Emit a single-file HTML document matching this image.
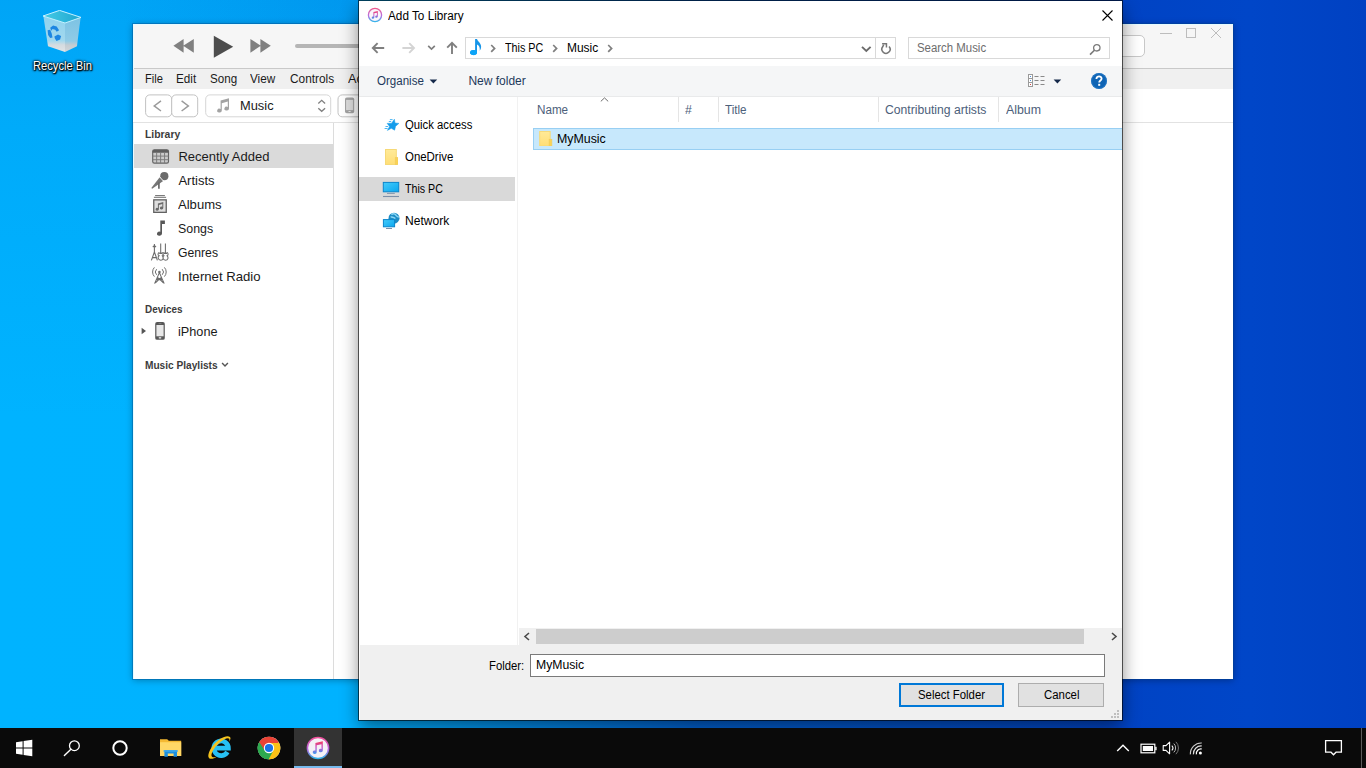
<!DOCTYPE html>
<html><head><meta charset="utf-8"><title>Add To Library</title>
<style>
html,body{margin:0;padding:0;}
body{width:1366px;height:768px;overflow:hidden;position:relative;font-family:"Liberation Sans",sans-serif;font-size:12px;background:#0078d7;}
div,svg,span{position:absolute;box-sizing:border-box;}
.t{white-space:nowrap;line-height:1;transform-origin:0 50%;}
#desk{left:0;top:0;width:1366px;height:728px;
 background:linear-gradient(90deg,#00b3ff 0px,#00b2ff 360px,#0060d0 700px,#0043c4 1122px,#0046c8 1250px,#0041c2 1366px);}
#deskv{left:0;top:0;width:360px;height:728px;background:linear-gradient(180deg,rgba(0,90,200,.16) 0px,rgba(0,90,200,.09) 130px,rgba(0,90,200,.0) 420px);}
#deskh{left:120px;top:0;width:240px;height:24px;background:linear-gradient(90deg,rgba(0,60,180,0),rgba(0,60,180,.12));}
#tb{left:0;top:728px;width:1366px;height:40px;background:#0a0a0a;}
</style></head><body>
<div id="desk"></div><div id="deskv"></div><div id="deskh"></div><svg style="left:40px;top:9.5px;" width="44" height="43" viewBox="0 0 44 43"><defs><linearGradient id="rbT" x1="0" y1="0" x2="1" y2="0"><stop offset="0" stop-color="#45cbe6"/><stop offset="1" stop-color="#1ea6d0"/></linearGradient><linearGradient id="rbL" x1="0" y1="0" x2="0" y2="1"><stop offset="0" stop-color="#8fd2ee"/><stop offset=".68" stop-color="#a2d8ee"/><stop offset=".8" stop-color="#d4dbe0"/><stop offset="1" stop-color="#e2e4e6"/></linearGradient><linearGradient id="rbR" x1="0" y1="0" x2="0" y2="1"><stop offset="0" stop-color="#7cc3e4"/><stop offset=".68" stop-color="#90cbe6"/><stop offset=".8" stop-color="#c4ccd2"/><stop offset="1" stop-color="#d2d6d9"/></linearGradient></defs><path d="M3.4 6.2 L25 12.8 L25 42 L8 36.2 Z" fill="url(#rbL)"/><path d="M25 12.8 L40.6 7.6 L37 36.2 L25 42 Z" fill="url(#rbR)"/><path d="M3 6 L19.6 0.4 L41 7.4 L25 13 Z" fill="url(#rbT)" stroke="#c4f1ff" stroke-width="1" stroke-linejoin="round"/><g fill="#1c86e2"><path d="M10.2 17.8 L13.1 15.5 L16.7 16.5 L19.1 20.2 L16.7 21.75 L15.2 19.7 L12.5 19.1 L11.25 20.7Z"/><path d="M7.6 20.2 L10.2 19.7 L11.8 23.8 L12.5 27.5 L10.2 28 L8.1 24.9Z"/><path d="M14.4 26.4 L18 24.4 L21.1 25.9 L20.1 29.6 L16.5 31.1 L14.9 28.5Z"/></g></svg><span class="t" style="left:33.00px;top:59.84px;font-size:12px;color:#fff;transform:scaleX(0.9312);text-shadow:0 1px 2px #000,0 0 3px #000,1px 1px 1px rgba(0,0,0,.9),0 0 2px #000;">Recycle Bin</span><div style="left:133px;top:24px;width:1100px;height:655px;background:#fff;box-shadow:0 0 0 1px rgba(0,70,140,.35),0 1px 7px rgba(0,0,0,.33);"></div><div style="left:133px;top:24px;width:1100px;height:45px;background:#f6f6f6;border-bottom:1px solid #c9c9c9;"></div><div style="left:133px;top:24px;width:1100px;height:1px;background:#e6fbff;"></div><div style="left:133px;top:24px;width:1px;height:655px;background:#e6fbff;"></div><div style="left:133px;top:69px;width:1100px;height:20px;background:#f0f0f0;"></div><div style="left:133px;top:89px;width:1100px;height:34px;background:#fff;border-bottom:1px solid #e2e2e2;"></div><div style="left:333px;top:123px;width:1px;height:556px;background:#dcdcdc;"></div><svg style="left:173px;top:38px;" width="22" height="16" viewBox="0 0 22 16"><path d="M0.4 7.8 L10.6 0.9 V14.7 Z M10.2 7.8 L20.8 0.9 V14.7 Z" fill="#808080"/></svg><svg style="left:213px;top:35px;" width="21" height="24" viewBox="0 0 21 24"><path d="M0.8 0.8 L20.2 11.8 L0.8 22.8 Z" fill="#4d4d4d"/></svg><svg style="left:250px;top:38px;" width="22" height="16" viewBox="0 0 22 16"><path d="M0.4 0.9 L10.8 7.8 L0.4 14.7 Z M10.4 0.9 L20.8 7.8 L10.4 14.7 Z" fill="#808080"/></svg><div style="left:295px;top:44px;width:80px;height:4px;background:#b5b5b5;border-radius:2px;"></div><div style="left:1160px;top:33px;width:12px;height:1px;background:#bdbdbd;"></div><div style="left:1186px;top:28px;width:10px;height:10px;border:1px solid #bdbdbd;"></div><svg style="left:1210px;top:27px;" width="12" height="12" viewBox="0 0 12 12"><path d="M1 1 L11 11 M11 1 L1 11" stroke="#bdbdbd" stroke-width="1" fill="none"/></svg><div style="left:1060px;top:35px;width:85px;height:22px;background:#fff;border:1px solid #c8c8c8;border-radius:5px;"></div><span class="t" style="left:145.00px;top:72.84px;font-size:12px;color:#1a1a1a;transform:scaleX(0.9309);">File</span><span class="t" style="left:175.80px;top:72.84px;font-size:12px;color:#1a1a1a;transform:scaleX(0.9769);">Edit</span><span class="t" style="left:209.50px;top:72.84px;font-size:12px;color:#1a1a1a;transform:scaleX(0.9670);">Song</span><span class="t" style="left:250.40px;top:72.84px;font-size:12px;color:#1a1a1a;transform:scaleX(0.9770);">View</span><span class="t" style="left:289.50px;top:72.84px;font-size:12px;color:#1a1a1a;transform:scaleX(0.9869);">Controls</span><span class="t" style="left:347.50px;top:72.84px;font-size:12px;color:#1a1a1a;transform:scaleX(1.0609);">Account</span><svg style="left:140px;top:90px;" width="220" height="32" viewBox="0 0 220 32"><rect x="5.6" y="4.9" width="26.1" height="21.9" rx="4.2" fill="#fff" stroke="#c2c2c2" stroke-width="1"/><rect x="31.7" y="4.9" width="26" height="21.9" rx="4.2" fill="#fff" stroke="#c2c2c2" stroke-width="1"/><rect x="65.7" y="4.9" width="125" height="21.9" rx="4.2" fill="#fff" stroke="#d6d6d6" stroke-width="1"/><rect x="198" y="4.9" width="40" height="21.9" rx="4.2" fill="#fff" stroke="#c2c2c2" stroke-width="1"/><path d="M21 10.8 L14.2 15.9 L21 21" stroke="#9a9a9a" stroke-width="1.45" fill="none"/><path d="M41.6 10.8 L48.4 15.9 L41.6 21" stroke="#9a9a9a" stroke-width="1.45" fill="none"/><path d="M178.3 13.4 L181.7 10.3 L185.1 13.4 M178.3 18.2 L181.7 21.3 L185.1 18.2" stroke="#808080" stroke-width="1.35" fill="none"/><rect x="205" y="7.4" width="9.2" height="15.8" rx="1.8" fill="#a4a4a4"/><rect x="206.1" y="9.9" width="7" height="10.2" fill="#dedede"/><rect x="208.5" y="21" width="2.2" height="1.1" rx=".3" fill="#e8e8e8"/></svg><svg style="left:216px;top:97px;" width="15" height="17" viewBox="0 0 15 17"><path d="M4.6 3.4 L13 1.2 V11.6 a2.3 1.9 0 1 1 -1.2 -1.7 V4.6 L5.8 6.2 V13.6 a2.3 1.9 0 1 1 -1.2 -1.7 Z" fill="#a3a3a3"/></svg><span class="t" style="left:240.40px;top:98.83px;font-size:13.2px;color:#1a1a1a;transform:scaleX(0.9749);">Music</span><span class="t" style="left:145.00px;top:128.89px;font-size:11px;color:#3c3c3c;font-weight:700;transform:scaleX(0.9439);">Library</span><div style="left:134px;top:144px;width:199px;height:24px;background:#dadada;"></div><span class="t" style="left:178.40px;top:149.80px;font-size:13px;color:#1a1a1a;">Recently Added</span><span class="t" style="left:178.40px;top:173.70px;font-size:13px;color:#1a1a1a;">Artists</span><span class="t" style="left:178.40px;top:197.50px;font-size:13px;color:#1a1a1a;transform:scaleX(1.0057);">Albums</span><span class="t" style="left:178.40px;top:221.50px;font-size:13px;color:#1a1a1a;transform:scaleX(0.9522);">Songs</span><span class="t" style="left:178.40px;top:245.70px;font-size:13px;color:#1a1a1a;transform:scaleX(0.9382);">Genres</span><span class="t" style="left:178.40px;top:269.80px;font-size:13px;color:#1a1a1a;transform:scaleX(1.0114);">Internet Radio</span><svg style="left:151px;top:148px;" width="19" height="17" viewBox="0 0 19 17"><rect x="1.7" y="1.7" width="15.8" height="13.4" rx="1.6" fill="#cbcbcb" stroke="#646464" stroke-width="1.15"/><path d="M1.7 3.2 a1.5 1.5 0 0 1 1.5 -1.5 h12.8 a1.5 1.5 0 0 1 1.5 1.5 v1.5 h-15.8z" fill="#5e5e5e"/><path d="M1.7 8.1 H17.5 M1.7 11.7 H17.5 M5.65 4.6 V15.1 M9.6 4.6 V15.1 M13.55 4.6 V15.1" stroke="#7a7a7a" stroke-width=".95"/></svg><svg style="left:151px;top:171px;" width="19" height="19" viewBox="0 0 19 19"><circle cx="13.3" cy="5.2" r="4.1" fill="#6b6b6b"/><path d="M8.7 6.3 L12.2 9.9 L1.2 17.7 L.3 17 Z" fill="#767676"/><path d="M8.4 5.5 L12.6 10.2" stroke="#fff" stroke-width=".85"/><path d="M7.9 11.2 V17.7" stroke="#6b6b6b" stroke-width="1.7"/></svg><svg style="left:152px;top:195px;" width="17" height="19" viewBox="0 0 17 19"><path d="M3.1 .6 H12.9 M1.9 2.3 H14.1" stroke="#6e6e6e" stroke-width="1"/><rect x="1.75" y="4.85" width="12.5" height="12.5" fill="#dedede" stroke="#626262" stroke-width="1.3"/><path d="M5.9 8.5 L11.3 7.1 V13.1 a1.7 1.4 0 1 1 -1 -1.3 V9 L6.9 9.9 V14.3 a1.7 1.4 0 1 1 -1 -1.3 Z" fill="#6a6a6a"/></svg><svg style="left:155px;top:219px;" width="12" height="19" viewBox="0 0 12 19"><path d="M5.3 1.5 H9.9 V5 H7 V14.6 a2.5 2.05 0 1 1 -1.7 -1.9 Z" fill="#585858"/></svg><svg style="left:150px;top:243px;" width="20" height="19" viewBox="0 0 20 19"><path d="M4.4 1 V9 M2.8 4.2 L4.4 2.4 L6 4.2 M1.4 17.4 L4.4 9 L7.4 17.4 M2.4 14.6 H6.4" stroke="#6c6c6c" stroke-width="1.1" fill="none"/><path d="M10.7 .4 V10.4 M15.4 .4 V10.4 M9.1 9.4 c-1.5 1.1 -1.3 2.8 0 3.4 c-1.7 1.2 -1.1 4.4 1.6 4.4 c2.6 0 3.2 -3 1.6 -4.4 c1.2 -.8 1.4 -2.4 0 -3.4 M13.9 9.4 c-1.5 1.1 -1.3 2.8 0 3.4 c-1.7 1.2 -1.1 4.4 1.6 4.4 c2.6 0 3.2 -3 1.6 -4.4 c1.2 -.8 1.4 -2.4 0 -3.4" stroke="#6c6c6c" stroke-width="1.05" fill="none"/><path d="M9.2 10.2 h3.2 M14 10.2 h3.2" stroke="#6c6c6c" stroke-width="1.4"/></svg><svg style="left:150px;top:267px;" width="19" height="19" viewBox="0 0 19 19"><path d="M9.4 5.6 L4.6 16.6 M9.4 5.6 L14.2 16.6 M6.4 12.6 L12.4 12.6 M7.4 10.2 L13.4 15.8 M11.4 10.2 L5.4 15.8" stroke="#6c6c6c" stroke-width="1.1" fill="none"/><circle cx="9.4" cy="5" r="1.3" fill="#6c6c6c"/><path d="M6.6 2.2 a4 4 0 0 0 0 5.6 M12.2 2.2 a4 4 0 0 1 0 5.6 M4.4 .4 a6.8 6.8 0 0 0 0 9.2 M14.4 .4 a6.8 6.8 0 0 1 0 9.2" stroke="#6c6c6c" stroke-width="1" fill="none"/></svg><span class="t" style="left:145.00px;top:303.99px;font-size:11px;color:#3c3c3c;font-weight:700;transform:scaleX(0.8993);">Devices</span><svg style="left:141px;top:327px;" width="6" height="8" viewBox="0 0 6 8"><path d="M.6 .8 L5 4 L.6 7.2Z" fill="#555"/></svg><svg style="left:154px;top:321px;" width="12" height="20" viewBox="0 0 12 20"><rect x="1.2" y="1.1" width="9.6" height="17.7" rx="1.9" fill="#575757"/><rect x="2.4" y="4" width="7.2" height="11.3" fill="#e8e8e8"/><rect x="4.7" y="16.2" width="2.6" height="1.3" rx=".4" fill="#f4f4f4"/><rect x="4.6" y="2.2" width="2.8" height=".7" fill="#8a8a8a"/></svg><span class="t" style="left:178.40px;top:324.80px;font-size:13px;color:#1a1a1a;transform:scaleX(0.9757);">iPhone</span><span class="t" style="left:145.00px;top:359.59px;font-size:11px;color:#3c3c3c;font-weight:700;transform:scaleX(0.9205);">Music Playlists</span><svg style="left:221px;top:361px;" width="8" height="7" viewBox="0 0 8 7"><path d="M1.1 1.9 L4 4.9 L6.9 1.9" stroke="#555" stroke-width="1.4" fill="none"/></svg><div style="left:359px;top:1px;width:763px;height:719px;background:#fff;box-shadow:0 0 0 1px rgba(0,0,0,.62),0 7px 17px rgba(0,0,0,.46);"></div><svg style="left:367px;top:7px;" width="16" height="16" viewBox="0 0 16 16"><defs><linearGradient id="dr" x1="0" y1="0" x2="0" y2="1"><stop offset="0" stop-color="#ee5a8e"/><stop offset=".55" stop-color="#b86ddf"/><stop offset="1" stop-color="#36b4ea"/></linearGradient><linearGradient id="dn" x1="0" y1="0" x2="0" y2="1"><stop offset="0" stop-color="#f2416a"/><stop offset=".5" stop-color="#c552c6"/><stop offset="1" stop-color="#3d97ee"/></linearGradient></defs><circle cx="8" cy="8" r="6.6" fill="#faf6fb" stroke="url(#dr)" stroke-width="1.3"/><path d="M6.4 4.9 L10.8 3.9 V9.6 a1.3 1.1 0 1 1 -.9 -1 V5.7 L7.3 6.3 V10.6 a1.3 1.1 0 1 1 -.9 -1 Z" fill="url(#dn)"/></svg><span class="t" style="left:388.20px;top:9.84px;font-size:12px;color:#000;transform:scaleX(0.9798);">Add To Library</span><svg style="left:1101px;top:9px;" width="13" height="13" viewBox="0 0 13 13"><path d="M1.5 1.5 L11.5 11.5 M11.5 1.5 L1.5 11.5" stroke="#000" stroke-width="1.1" fill="none"/></svg><svg style="left:371px;top:41px;" width="15" height="14" viewBox="0 0 15 14"><path d="M13.2 7 H2.4 M6.6 2.2 L1.8 7 L6.6 11.8" stroke="#7f7f7f" stroke-width="1.9" fill="none"/></svg><svg style="left:401px;top:41px;" width="15" height="14" viewBox="0 0 15 14"><path d="M1.4 7 H12.4 M8.2 2.2 L13 7 L8.2 11.8" stroke="#d4d4d4" stroke-width="1.9" fill="none"/></svg><svg style="left:427px;top:44px;" width="9" height="7" viewBox="0 0 9 7"><path d="M1.2 1.8 L4.5 5 L7.8 1.8" stroke="#7f7f7f" stroke-width="1.7" fill="none"/></svg><svg style="left:445px;top:41px;" width="14" height="14" viewBox="0 0 14 14"><path d="M7 12.9 V2.4 M2.2 6.6 L7 1.8 L11.8 6.6" stroke="#7f7f7f" stroke-width="1.9" fill="none"/></svg><div style="left:465px;top:37px;width:431px;height:22px;background:#fff;border:1px solid #d9d9d9;"></div><div style="left:875px;top:38px;width:1px;height:20px;background:#d9d9d9;"></div><svg style="left:469px;top:38px;" width="13" height="18" viewBox="0 0 13 18"><path d="M6.1 1.1 H8 C8.6 3.6 12.4 5.2 12.1 9 C12 10.6 11.4 12 10.6 12.8 C11.2 10 10.4 7.4 8 6.4 V14.5 A3.5 2.5 0 1 1 6.1 12.4 Z" fill="#1795e8"/><ellipse cx="4.6" cy="14.5" rx="3.4" ry="2.4" fill="#0ca5f8"/></svg><svg style="left:490px;top:44px;" width="6" height="9" viewBox="0 0 6 9"><path d="M1.2 1 L4.6 4.4 L1.2 7.8" stroke="#7f7f7f" stroke-width="1.7" fill="none"/></svg><svg style="left:552px;top:44px;" width="6" height="9" viewBox="0 0 6 9"><path d="M1.2 1 L4.6 4.4 L1.2 7.8" stroke="#7f7f7f" stroke-width="1.7" fill="none"/></svg><svg style="left:607px;top:44px;" width="6" height="9" viewBox="0 0 6 9"><path d="M1.2 1 L4.6 4.4 L1.2 7.8" stroke="#7f7f7f" stroke-width="1.7" fill="none"/></svg><span class="t" style="left:505.00px;top:41.84px;font-size:12px;color:#000;transform:scaleX(0.8952);">This PC</span><span class="t" style="left:567.00px;top:41.84px;font-size:12px;color:#000;transform:scaleX(0.9957);">Music</span><svg style="left:861px;top:45px;" width="11" height="8" viewBox="0 0 11 8"><path d="M1 1.9 L5.3 6 L9.6 1.9" stroke="#6b6b6b" stroke-width="1.9" fill="none"/></svg><svg style="left:880px;top:42px;" width="12" height="13" viewBox="0 0 12 13"><path d="M9.05 4.46 A4.1 4.1 0 1 1 2.7 4.75 L3.7 2.7" stroke="#777" stroke-width="1.55" fill="none"/><path d="M2.1 1.75 H6.45 V5.6" stroke="#777" stroke-width="1.5" fill="none"/></svg><div style="left:908px;top:37px;width:202px;height:22px;background:#fff;border:1px solid #d9d9d9;"></div><span class="t" style="left:917.40px;top:41.84px;font-size:12px;color:#6d6d6d;transform:scaleX(0.9506);">Search Music</span><svg style="left:1089px;top:43px;" width="13" height="13" viewBox="0 0 13 13"><circle cx="7.8" cy="4.8" r="3.2" stroke="#7a7a7a" stroke-width="1.3" fill="none"/><path d="M5.4 7.2 L1 11.6" stroke="#7a7a7a" stroke-width="1.6"/></svg><div style="left:359px;top:66px;width:763px;height:31px;background:#f5f6f7;border-bottom:1px solid #e9eaeb;"></div><span class="t" style="left:377.30px;top:74.84px;font-size:12px;color:#1e395b;transform:scaleX(0.9632);">Organise</span><svg style="left:429px;top:79px;" width="9" height="5" viewBox="0 0 9 5"><path d="M.6 .4 H8.2 L4.4 4.4Z" fill="#15294a"/></svg><span class="t" style="left:468.40px;top:74.84px;font-size:12px;color:#1e395b;">New folder</span><svg style="left:1027.5px;top:74px;" width="18" height="13" viewBox="0 0 18 13"><rect x=".5" y=".5" width="4" height="12" fill="#fff" stroke="#9a9a9a" stroke-width="1"/><path d="M.5 4.5 H4.5 M.5 8.5 H4.5" stroke="#9a9a9a"/><rect x="2" y="2" width="1" height="1" fill="#4a90d9"/><rect x="2" y="6" width="1" height="1" fill="#4a90d9"/><rect x="2" y="10" width="1" height="1" fill="#d64545"/><path d="M6.5 2.5 H10.5 M12.5 2.5 H16.5 M6.5 6.5 H10.5 M12.5 6.5 H16.5 M6.5 10.5 H10.5 M12.5 10.5 H16.5" stroke="#8a8a8a" stroke-width="1"/></svg><svg style="left:1053px;top:79px;" width="9" height="5" viewBox="0 0 9 5"><path d="M.6 .4 H8.2 L4.4 4.4Z" fill="#15294a"/></svg><svg style="left:1090px;top:72px;" width="18" height="18" viewBox="0 0 18 18"><circle cx="9" cy="9" r="8" fill="#0f64b4"/><circle cx="9" cy="9" r="7.4" fill="none" stroke="#2a7fd0" stroke-width=".6"/><path d="M6.4 7 C6.4 3.4 11.8 3.6 11.6 6.8 C11.5 8.6 9.2 8.6 9.2 10.6" stroke="#fff" stroke-width="1.8" fill="none"/><rect x="8.2" y="11.8" width="2" height="2" fill="#fff"/></svg><div style="left:517px;top:97px;width:1px;height:548px;background:#f1f1f1;"></div><div style="left:359px;top:177px;width:156px;height:24px;background:#d9d9d9;"></div><svg style="left:384px;top:118px;" width="16" height="14" viewBox="0 0 16 14"><path d="M10.4 1.2 L11 5 L14.9 5.4 L11.6 8.3 L10.6 12.2 L7.3 10.3 L3.4 12.4 L5.6 8.4 L3.1 5.4 L7.6 5.2 Z" fill="#149ceb" stroke="#149ceb" stroke-width=".5" stroke-linejoin="round"/><path d="M5.9 1.6 H8.6 M4.8 3.5 H7.2 M1.5 8.5 H4.2 M.6 10.5 H3.6" stroke="#3aaef0" stroke-width=".9"/></svg><svg style="left:384.5px;top:149px;" width="13.5" height="16" viewBox="0 0 13.5 16"><defs><linearGradient id="fg" x1="0" y1="0" x2="0" y2="1"><stop offset="0" stop-color="#ffea98"/><stop offset="1" stop-color="#ffde76"/></linearGradient></defs><rect x=".5" y=".5" width="10.8" height="15" fill="url(#fg)" stroke="#f6d977" stroke-width="1"/><rect x="10.3" y="8.6" width="2.7" height="6.9" fill="#fad355" stroke="#f3cd5c" stroke-width=".8"/></svg><svg style="left:382px;top:181px;" width="18" height="17" viewBox="0 0 18 17"><defs><linearGradient id="pc" x1="0" y1="0" x2="1" y2="1"><stop offset="0" stop-color="#45ccfb"/><stop offset="1" stop-color="#0aa6ee"/></linearGradient></defs><rect x="1.3" y="1.4" width="15.4" height="9.4" fill="url(#pc)" stroke="#0b86cc" stroke-width="1"/><path d="M5 12.4 H12.8" stroke="#8496ad" stroke-width="1"/><path d="M1 15.5 H17" stroke="#7d90a9" stroke-width="1.1"/></svg><svg style="left:382px;top:212px;" width="18" height="18" viewBox="0 0 18 18"><circle cx="12" cy="6.2" r="5.5" fill="#1d8cc4"/><path d="M9.4 2.6 c1.4 -1.2 3.4 -1.2 4.4 .4 c.8 1.4 2.4 1.6 3 2.4 M8.6 5 c2.2 -.6 3.2 1 4.8 1.4" stroke="#8ad6f5" stroke-width="1.5" fill="none"/><rect x="1.4" y="7.6" width="11.2" height="7.2" fill="url(#pc)" stroke="#0b86cc" stroke-width="1"/><path d="M4 16.5 H10" stroke="#7d90a9" stroke-width="1"/></svg><span class="t" style="left:404.70px;top:118.84px;font-size:12px;color:#000;transform:scaleX(0.9432);">Quick access</span><span class="t" style="left:404.70px;top:150.84px;font-size:12px;color:#000;transform:scaleX(0.9530);">OneDrive</span><span class="t" style="left:404.70px;top:182.84px;font-size:12px;color:#000;transform:scaleX(0.8881);">This PC</span><span class="t" style="left:404.70px;top:214.84px;font-size:12px;color:#000;transform:scaleX(1.0043);">Network</span><div style="left:678px;top:97px;width:1px;height:25px;background:#e5e5e5;"></div><div style="left:718px;top:97px;width:1px;height:25px;background:#e5e5e5;"></div><div style="left:878px;top:97px;width:1px;height:25px;background:#e5e5e5;"></div><div style="left:998px;top:97px;width:1px;height:25px;background:#e5e5e5;"></div><svg style="left:600px;top:97px;" width="9" height="5" viewBox="0 0 9 5"><path d="M.8 4.4 L4.5 .9 L8.2 4.4" stroke="#6d6d6d" stroke-width="1" fill="none"/></svg><span class="t" style="left:536.70px;top:103.84px;font-size:12px;color:#4c607a;transform:scaleX(0.9716);">Name</span><span class="t" style="left:685.20px;top:103.84px;font-size:12px;color:#4c607a;transform:scaleX(1.0189);">#</span><span class="t" style="left:725.40px;top:103.84px;font-size:12px;color:#4c607a;transform:scaleX(0.9719);">Title</span><span class="t" style="left:885.40px;top:103.84px;font-size:12px;color:#4c607a;transform:scaleX(1.0136);">Contributing artists</span><span class="t" style="left:1005.60px;top:103.84px;font-size:12px;color:#4c607a;transform:scaleX(1.0290);">Album</span><div style="left:533px;top:128px;width:589px;height:22px;background:#c7e8fc;border:1px solid #98cff3;border-right:none;"></div><svg style="left:539px;top:130.5px;" width="13.5" height="15.5" viewBox="0 0 13.5 16"><defs><linearGradient id="fg" x1="0" y1="0" x2="0" y2="1"><stop offset="0" stop-color="#ffea98"/><stop offset="1" stop-color="#ffde76"/></linearGradient></defs><rect x=".5" y=".5" width="10.8" height="15" fill="url(#fg)" stroke="#f6d977" stroke-width="1"/><rect x="10.3" y="8.6" width="2.7" height="6.9" fill="#fad355" stroke="#f3cd5c" stroke-width=".8"/></svg><span class="t" style="left:557.20px;top:132.64px;font-size:12px;color:#000;transform:scaleX(1.0310);">MyMusic</span><div style="left:519px;top:628px;width:603px;height:17px;background:#f0f0f0;"></div><div style="left:536px;top:629px;width:548px;height:15px;background:#cdcdcd;"></div><svg style="left:523px;top:632px;" width="8" height="9" viewBox="0 0 8 9"><path d="M6 1 L2 4.5 L6 8" stroke="#4a4a4a" stroke-width="1.6" fill="none"/></svg><svg style="left:1110px;top:632px;" width="8" height="9" viewBox="0 0 8 9"><path d="M2 1 L6 4.5 L2 8" stroke="#4a4a4a" stroke-width="1.6" fill="none"/></svg><div style="left:360px;top:645px;width:762px;height:75px;background:#f0f0f0;"></div><span class="t" style="left:489.30px;top:660.14px;font-size:12px;color:#000;transform:scaleX(0.9425);">Folder:</span><div style="left:530px;top:654px;width:575px;height:23px;background:#fff;border:1px solid #7a7a7a;"></div><span class="t" style="left:536.30px;top:658.84px;font-size:12px;color:#000;transform:scaleX(1.0183);">MyMusic</span><div style="left:899px;top:683px;width:105px;height:24px;background:#e1e1e1;border:2px solid #0078d7;"></div><span class="t" style="left:918.30px;top:689.14px;font-size:12px;color:#000;transform:scaleX(0.9477);">Select Folder</span><div style="left:1018px;top:683px;width:86px;height:24px;background:#e1e1e1;border:1px solid #adadad;"></div><span class="t" style="left:1043.50px;top:689.14px;font-size:12px;color:#000;transform:scaleX(0.9504);">Cancel</span><svg style="left:1111px;top:710px;" width="8" height="8" viewBox="0 0 8 8"><rect x="6" y="0" width="2" height="2" fill="#bfbfbf"/><rect x="3" y="3" width="2" height="2" fill="#bfbfbf"/><rect x="6" y="3" width="2" height="2" fill="#bfbfbf"/><rect x="0" y="6" width="2" height="2" fill="#bfbfbf"/><rect x="3" y="6" width="2" height="2" fill="#bfbfbf"/><rect x="6" y="6" width="2" height="2" fill="#bfbfbf"/></svg><div id="tb"></div><svg style="left:15px;top:739px;" width="18" height="18" viewBox="0 0 18 18"><path fill="#fff" d="M1 3.2 L7.6 2.2 V8.5 H1 Z M8.6 2.05 L17.3 0.8 V8.5 H8.6 Z M1 9.5 H7.6 V15.8 L1 14.8 Z M8.6 9.5 H17.3 V17.2 L8.6 15.95 Z"/></svg><svg style="left:62px;top:738px;" width="20" height="20" viewBox="0 0 20 20"><circle cx="12.4" cy="7.7" r="4.9" fill="none" stroke="#fff" stroke-width="1.3"/><path d="M8.9 11.2 L2.4 17.6" stroke="#fff" stroke-width="1.4" stroke-linecap="round"/></svg><svg style="left:110px;top:738px;" width="20" height="20" viewBox="0 0 20 20"><circle cx="10" cy="10" r="6.7" fill="none" stroke="#fff" stroke-width="2"/></svg><svg style="left:159px;top:737px;" width="24" height="22" viewBox="0 0 24 22"><path d="M1 2.2 h7.2 l1.6 1.6 h12.4 v15.2 h-21.2z" fill="#f5b932"/><path d="M1 5.2 h21.2 v13.8 h-21.2z" fill="#ffd766"/><path d="M5.4 19.8 v-6.6 h12.6 v6.6 h-3.4 v-3.4 h-5.8 v3.4z" fill="#1c8fdf"/><path d="M4.6 13.2 h14.2 v1.6 h-14.2z" fill="#3aa7ee"/></svg><svg style="left:207px;top:734px;" width="26" height="26" viewBox="0 0 26 26"><path d="M20.4 18 A7.3 7.3 0 1 1 21.4 14.2 H8.4" stroke="#27c1f4" stroke-width="4.7" fill="none"/><path d="M23 3 c-3 -2.6 -11.4 1.2 -17 8.6 c-4.6 6 -5.8 11.4 -3.6 12.8 c1.8 1.1 5 .1 7.2 -1.7 c-2.6 1.1 -4.6 .7 -5 -.7 c-.8 -2.6 2.4 -8.4 7 -12.6 c4.4 -4 9.6 -6.2 10.6 -4.6 c.4 .6 .2 1.8 -.3 2.9 c1.6 -1.9 2.1 -3.7 1.1 -4.7z" fill="#f5c31d"/></svg><svg style="left:257px;top:736px;" width="24" height="24" viewBox="0 0 24 24"><circle cx="12" cy="12" r="11.3" fill="#fff"/><path d="M12 12 L2.2 6.35 A11.3 11.3 0 0 1 21.8 6.35 Z" fill="#ea4335"/><path d="M12 12 L21.8 6.35 A11.3 11.3 0 0 1 12 23.3 Z" fill="#fbc116"/><path d="M12 12 L12 23.3 A11.3 11.3 0 0 1 2.2 6.35 Z" fill="#2da94f"/><path d="M12 6.9 H21.5 A11.3 11.3 0 0 0 2.2 6.35 L7.6 14.5 Z" fill="#ea4335"/><path d="M16.4 14.55 L11.7 23.3 A11.3 11.3 0 0 0 21.5 6.9 H12 Z" fill="#fbc116"/><path d="M7.6 14.55 L2.2 6.35 A11.3 11.3 0 0 0 11.7 23.3 L16.4 14.55 Z" fill="#2da94f"/><circle cx="12" cy="12" r="5.2" fill="#fff"/><circle cx="12" cy="12" r="4.1" fill="#1a73e8"/></svg><div style="left:294px;top:728px;width:48px;height:40px;background:#333;"></div><div style="left:294px;top:766px;width:48px;height:2px;background:#76b9ed;"></div><svg style="left:306px;top:736px;" width="24" height="24" viewBox="0 0 24 24"><defs><linearGradient id="itr" x1="0" y1="0" x2="0" y2="1"><stop offset="0" stop-color="#f0529a"/><stop offset=".55" stop-color="#b765e0"/><stop offset="1" stop-color="#2fb5ec"/></linearGradient><linearGradient id="itn" x1="0" y1="0" x2="0" y2="1"><stop offset="0" stop-color="#f43e5c"/><stop offset=".5" stop-color="#c44fc9"/><stop offset="1" stop-color="#3a9cf0"/></linearGradient></defs><circle cx="12" cy="12" r="10.6" fill="#f4f1f6" stroke="url(#itr)" stroke-width="1.5"/><path d="M9.4 6.9 L16.8 5.2 V14.6 a2 1.7 0 1 1 -1.3 -1.6 V8.2 L10.7 9.3 V16.2 a2 1.7 0 1 1 -1.3 -1.6 Z" fill="url(#itn)"/></svg><svg style="left:1116px;top:743px;" width="14" height="10" viewBox="0 0 14 10"><path d="M1.2 8 L7 2.2 L12.8 8" stroke="#fff" fill="none" stroke-width="1.4"/></svg><svg style="left:1139.5px;top:743px;" width="18" height="12" viewBox="0 0 18 12"><rect x="1" y="1.2" width="13.8" height="8.6" stroke="#fff" fill="none" stroke-width="1.2"/><rect x="2.8" y="3" width="10.2" height="5" fill="#fff"/><rect x="15.2" y="3.8" width="1.4" height="3.4" fill="#fff"/></svg><svg style="left:1162px;top:740px;" width="20" height="16" viewBox="0 0 20 16"><path d="M1.2 5.6 h2.8 l3.6 -3.4 v11.6 l-3.6 -3.4 h-2.8z" stroke="#fff" fill="none" stroke-width="1.1" stroke-linejoin="round"/><path d="M9.8 5.6 a3.4 3.4 0 0 1 0 4.8" stroke="#fff" fill="none" stroke-width="1.1"/><path d="M11.8 3.6 a6.2 6.2 0 0 1 0 8.8" stroke="#bbb" fill="none" stroke-width="1"/><path d="M13.9 1.8 a8.8 8.8 0 0 1 0 12.4" stroke="#777" fill="none" stroke-width="1"/></svg><svg style="left:1189px;top:741px;" width="15" height="15" viewBox="0 0 15 15"><circle cx="11.4" cy="12" r="1.5" fill="#fff"/><path d="M7.4 13.4 a4.6 4.6 0 0 1 5.4 -5.4" stroke="#fff" fill="none" stroke-width="1.2"/><path d="M4.4 13.4 a7.8 7.8 0 0 1 8.4 -8.4" stroke="#ddd" fill="none" stroke-width="1.2"/><path d="M1.4 13.4 a10.8 10.8 0 0 1 11.4 -11.4" stroke="#ccc" fill="none" stroke-width="1.2"/></svg><svg style="left:1324px;top:739px;" width="19" height="18" viewBox="0 0 19 18"><path d="M1.6 1.6 h15.8 v11.6 h-5.4 l-2.5 2.6 l-2.5 -2.6 h-5.4z" stroke="#fff" fill="none" stroke-width="1.3" stroke-linejoin="miter"/></svg><div style="left:1361px;top:728px;width:1px;height:40px;background:#5a5a5a;"></div>
</body></html>
